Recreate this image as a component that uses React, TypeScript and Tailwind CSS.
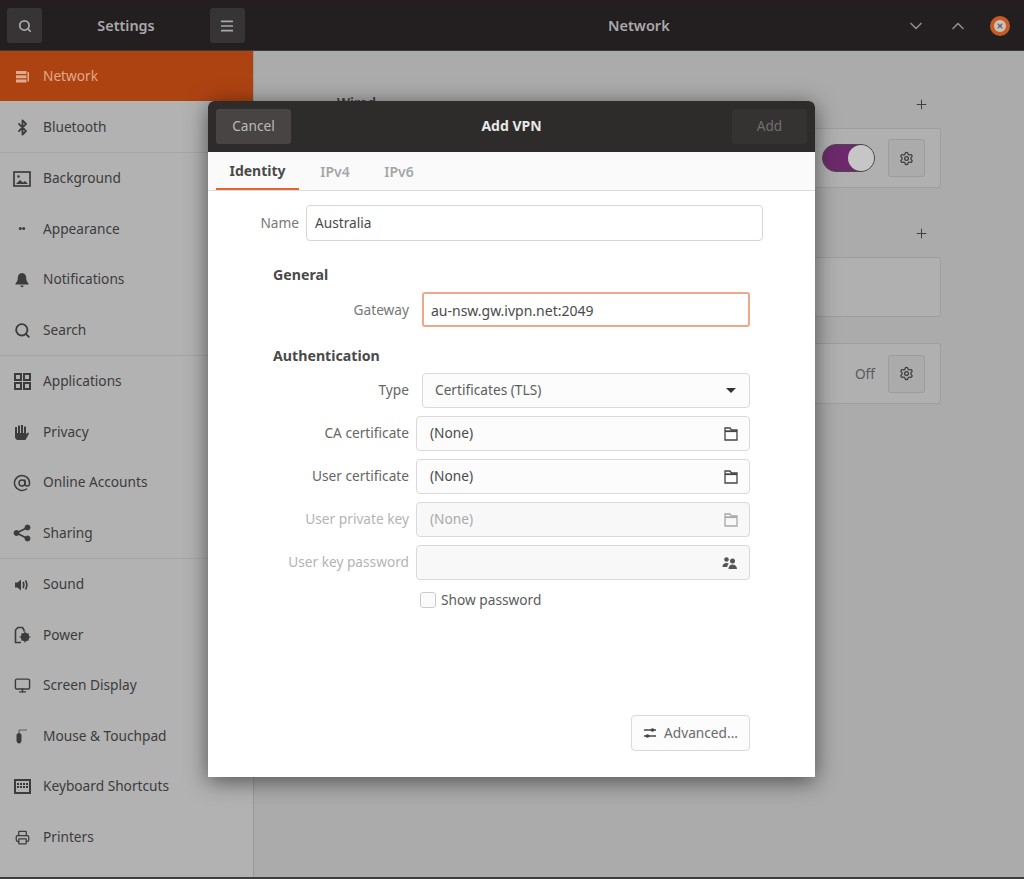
import { AtSign, Bluetooth, ChevronDown, ChevronUp, Menu, Monitor, Plus, Printer, Search, Settings, X } from 'lucide-react';
import type { ReactNode } from 'react';

const NetworkIcon = () => (
  <svg width="16" height="16" viewBox="0 0 16 16" fill="currentColor">
    <path d="M1 2h10.500v3H1zM1 6.200h10.500v3H1zM1 10.400h10.500v3H1zM12.500 3h1.500v9.500h-1.500z" />
  </svg>
);

const PictureIcon = () => (
  <svg width="18" height="16" viewBox="0 0 18 16" fill="none" stroke="currentColor" strokeWidth="1.700">
    <rect x="1" y="1" width="16" height="14" />
    <circle cx="5.500" cy="5.500" r="1.300" fill="currentColor" stroke="none" />
    <path d="M3 13l4-4 3 2.500 2-1.500 3 3z" fill="currentColor" stroke="none" />
  </svg>
);

const AppearanceIcon = () => (
  <svg width="16" height="16" viewBox="0 0 16 16" fill="currentColor">
    <circle cx="6.300" cy="7.500" r="1.500" />
    <circle cx="9.700" cy="7.500" r="1.500" />
  </svg>
);

const BellIcon = () => (
  <svg width="16" height="16" viewBox="0 0 16 16" fill="currentColor">
    <path d="M8 1c-2.800 0-4.200 2.200-4.200 4.700 0 2.500-.8 4.300-2.300 5.800v1h13v-1c-1.500-1.500-2.300-3.300-2.300-5.800C12.200 3.200 10.800 1 8 1zM6.300 13.500h3.400a1.700 1.700 0 0 1-3.400 0z" />
  </svg>
);

const AppsIcon = () => (
  <svg width="17" height="17" viewBox="0 0 17 17" fill="none" stroke="currentColor" strokeWidth="2">
    <rect x="1" y="1" width="6" height="6" />
    <rect x="10" y="1" width="6" height="6" />
    <rect x="1" y="10" width="6" height="6" />
    <rect x="10" y="10" width="6" height="6" />
  </svg>
);

const HandIcon = () => (
  <svg width="18" height="18" viewBox="0 0 18 18" fill="currentColor">
    <path d="M2 4h2v6h1V2.500h2V10h1V2h2v8h1V3.500h2V11l2-1.500 1 1-3.500 6.500H5c-2 0-3-1.500-3-3.500z" />
  </svg>
);

const ShareIcon = () => (
  <svg width="18" height="18" viewBox="0 0 18 18" fill="currentColor" stroke="currentColor">
    <circle cx="3.500" cy="9" r="2.500" />
    <circle cx="14.500" cy="3.500" r="2.500" />
    <circle cx="14.500" cy="14.500" r="2.500" />
    <path d="M3.500 9l11-5.500M3.500 9l11 5.500" strokeWidth="1.800" />
  </svg>
);

const SoundIcon = () => (
  <svg width="16" height="16" viewBox="0 0 16 16" fill="currentColor">
    <path d="M1 5.500h2.500L7 2.500v11l-3.500-3H1z" />
    <path d="M9 5c1 1.800 1 4.200 0 6M11.500 3.500c1.700 2.800 1.700 6.200 0 9" fill="none" stroke="currentColor" strokeWidth="1.600" />
  </svg>
);

const PowerIcon = () => (
  <svg width="18" height="18" viewBox="0 0 18 18" fill="none" stroke="currentColor" strokeWidth="1.600">
    <path d="M8 16.500H2.500V4L5 1.500h4.500L11 4v1.500" />
    <circle cx="12" cy="11" r="3.500" fill="currentColor" />
    <path d="M12 5.500v11M6.500 11h11M8.500 7.500l7 7M15.500 7.500l-7 7" strokeWidth="1.200" />
  </svg>
);

const MouseIcon = () => (
  <svg width="18" height="18" viewBox="0 0 18 18" fill="currentColor">
    <path d="M3.500 8.500c0-1.500 1-2.500 2.300-2.500h.4c1.300 0 2.300 1 2.300 2.500v5c0 1.500-1 3-2.500 3s-2.500-1.500-2.500-3z" />
    <path d="M5.500 6V3h1.200v3zM6 2.500h8v1H6z" opacity="0.7" />
  </svg>
);

const KeyboardIcon = () => (
  <svg width="17" height="15" viewBox="0 0 17 15" fill="none" stroke="currentColor" strokeWidth="2">
    <rect x="1" y="1" width="15" height="13" />
    <path d="M3 5h11M3 8h11" strokeDasharray="2 1" />
  </svg>
);

// folder with the tab sticking up at the left, as in the file choosers
const FolderIcon = ({ className }: { className: string }) => (
  <svg width="14" height="14" viewBox="0 0 14 14" fill="none" stroke="currentColor" strokeWidth="1.300" className={className}>
    <path d="M1 1h5l1.500 2H13v10H1z" />
    <path d="M1 4.200h12" strokeWidth="1.800" />
  </svg>
);

const PeopleIcon = () => (
  <svg width="16" height="14" viewBox="0 0 16 14" fill="currentColor" className="text-[#555555]">
    <circle cx="4.500" cy="3.500" r="2.300" />
    <path d="M0.500 11c0-2.500 1.500-4 4-4 1 0 1.800.2 2.400.7C5.800 8.500 5.300 9.700 5.300 11z" />
    <circle cx="10.500" cy="5" r="2.500" />
    <path d="M6.500 13c0-2.700 1.500-4.500 4-4.500s4.500 1.800 4.500 4.500z" />
  </svg>
);

const SwitchesIcon = () => (
  <svg width="14" height="14" viewBox="0 0 14 14" fill="currentColor" stroke="currentColor" className="text-[#444444]">
    <path d="M1 4h12M1 10h12" strokeWidth="1.300" fill="none" />
    <circle cx="9.500" cy="4" r="1.800" stroke="none" />
    <circle cx="4.500" cy="10" r="1.800" stroke="none" />
  </svg>
);

const items: { name: string; icon: ReactNode; divider?: boolean }[] = [
  { name: 'Bluetooth', icon: <Bluetooth size={17} strokeWidth={2.6} />, divider: true },
  { name: 'Background', icon: <PictureIcon /> },
  { name: 'Appearance', icon: <AppearanceIcon /> },
  { name: 'Notifications', icon: <BellIcon /> },
  { name: 'Search', icon: <Search size={17} strokeWidth={2.6} />, divider: true },
  { name: 'Applications', icon: <AppsIcon /> },
  { name: 'Privacy', icon: <HandIcon /> },
  { name: 'Online Accounts', icon: <AtSign size={18} strokeWidth={2} /> },
  { name: 'Sharing', icon: <ShareIcon />, divider: true },
  { name: 'Sound', icon: <SoundIcon /> },
  { name: 'Power', icon: <PowerIcon /> },
  { name: 'Screen Display', icon: <Monitor size={17} strokeWidth={2} /> },
  { name: 'Mouse & Touchpad', icon: <MouseIcon /> },
  { name: 'Keyboard Shortcuts', icon: <KeyboardIcon /> },
  { name: 'Printers', icon: <Printer size={15} strokeWidth={2} /> },
];

const FormRow = ({ label, dim, offset, children }: { label: string; dim?: boolean; offset: string; children: ReactNode }) => (
  <div className="flex items-center h-[35px] mb-2">
    <span className={`w-[201px] text-right ${offset} ${dim ? 'text-[#b4b4b4]' : 'text-[#666666]'}`}>{label}</span>
    {children}
  </div>
);

const FileField = ({ value, dim, icon }: { value?: string; dim?: boolean; icon: ReactNode }) => (
  <div className={`w-[334px] h-[35px] flex items-center justify-between pl-[13px] pr-[11px] rounded-[4px] border border-[#d9d9d9] ${dim ? 'bg-[#f8f8f8] text-[#aaaaaa]' : 'bg-[#fcfcfc] text-[#4a4a4a]'}`}>
    <span>{value}</span>
    {icon}
  </div>
);

const App = () => {
  return (
    <div className="relative w-[1024px] h-[879px] overflow-hidden flex flex-col bg-[#ababab] text-[13.7px] font-['Noto_Sans','Open_Sans',sans-serif]">
      {/* Title bar */}
      <header className="h-[51px] shrink-0 flex bg-[#231f20] border-t border-[#2c1c22] border-b border-b-[#3a3a3a] text-[#a9a9a9]">
        <div className="w-[253px] shrink-0 flex items-center justify-between pl-[7px] pr-[8px]">
          <button className="w-[35px] h-[35px] rounded-[3px] bg-[#363434] flex items-center justify-center">
            <Search size={14} strokeWidth={3} />
          </button>
          <span className="font-semibold text-[14.4px] text-[#a8a8a8]">Settings</span>
          <button className="w-[35px] h-[35px] rounded-[3px] bg-[#363434] flex items-center justify-center">
            <Menu size={16} strokeWidth={2.6} />
          </button>
        </div>
        <div className="flex-1 flex items-center pl-[355px]">
          <span className="font-semibold text-[14.5px]">Network</span>
          <ChevronDown size={20} strokeWidth={2} className="ml-[236px] text-[#8d8d8d]" />
          <ChevronUp size={20} strokeWidth={2} className="ml-[22px] text-[#8d8d8d]" />
          <span className="ml-[22px] w-[20px] h-[20px] rounded-full bg-[#c95a26] flex items-center justify-center">
            <span className="w-[12px] h-[12px] rounded-full bg-[#c9c3bf] flex items-center justify-center">
              <X size={8} strokeWidth={3.5} className="text-[#6b5a55]" />
            </span>
          </span>
        </div>
      </header>

      <div className="flex-1 flex min-h-0 border-b-2 border-[#3d3d3d]">
        {/* Sidebar */}
        <aside className="w-[254px] shrink-0 flex flex-col bg-[#b2b2b2] border-r border-[#989898] text-[#3c3c3c]">
          <div className="h-[50px] shrink-0 flex items-center pt-[1px] bg-[#ae4312] text-[#dfa98b] pl-[15px]">
            <NetworkIcon />
            <span className="ml-[12px]">Network</span>
          </div>
          {items.map((item) => (
            <div key={item.name} className={`shrink-0 flex items-center pt-[2px] ${item.divider ? 'h-[51.5px] border-b border-[#a6a6a6]' : 'h-[50.5px]'}`}>
              <span className="w-[43px] flex items-center justify-center pl-[1px]">{item.icon}</span>
              <span>{item.name}</span>
            </div>
          ))}
        </aside>

        {/* Network panel behind the dialog */}
        <main className="flex-1 flex flex-col items-center pt-[42px] text-[#5a5a5a]">
          <div className="w-[604px]">
            <div className="h-[35px] flex justify-between pr-[12px]">
              <span className="font-semibold text-[#3c3c3c]">Wired</span>
              <Plus size={15} strokeWidth={1.6} className="mt-[4px] text-[#3f3f3f]" />
            </div>
            <div className="h-[60px] flex items-center justify-end gap-[13px] pr-[15px] rounded-[3px] border border-[#9e9e9e] bg-[#b0b0b0]">
              <div className="w-[53px] h-[28px] rounded-full bg-[#6c2a6c] border border-[#4a4a4a] flex justify-end">
                <span className="w-[26px] h-[26px] rounded-full bg-[#c6c6c6]" />
              </div>
              <button className="w-[37px] h-[38px] rounded-[3px] border border-[#9c9c9c] bg-[#ababab] flex items-center justify-center">
                <Settings size={15} strokeWidth={2} className="text-[#3c3c3c]" />
              </button>
            </div>
            <div className="h-[69px] flex items-end justify-end pb-[16px] pr-[12px]">
              <Plus size={15} strokeWidth={1.6} className="text-[#3f3f3f]" />
            </div>
            <div className="h-[60px] rounded-[3px] border border-[#9e9e9e] bg-[#b0b0b0]" />
            <div className="mt-[26px] h-[61px] flex items-center justify-end gap-[13px] pr-[15px] rounded-[3px] border border-[#9e9e9e] bg-[#b0b0b0]">
              <span className="pt-[2px]">Off</span>
              <button className="w-[37px] h-[38px] rounded-[3px] border border-[#9c9c9c] bg-[#ababab] flex items-center justify-center">
                <Settings size={15} strokeWidth={2} className="text-[#3c3c3c]" />
              </button>
            </div>
          </div>
        </main>
      </div>

      {/* Add VPN dialog */}
      <section className="absolute left-[208px] top-[101px] w-[607px] h-[676px] flex flex-col rounded-t-[6px] bg-white shadow-[0_4px_22px_rgba(0,0,0,0.55)]">
        <div className="h-[51px] shrink-0 flex items-center justify-between px-[8px] pb-[1px] rounded-t-[6px] bg-[#2e2b2b]">
          <button className="w-[75px] h-[35px] rounded-[3px] bg-[#484444] text-[#b9b9b9]">Cancel</button>
          <span className="mb-[1px] font-bold text-[14px] text-[#e8e8e8]">Add VPN</span>
          <button className="w-[75px] h-[35px] rounded-[3px] bg-[#353232] text-[#6f6f6f]">Add</button>
        </div>
        <nav className="h-[39px] shrink-0 flex px-[8px] bg-[#fafafa] border-b border-[#dcdcdc]">
          <span className="w-[83px] flex items-center justify-center font-bold text-[14px] text-[#4a4a4a] border-b-2 border-[#e2672e]">Identity</span>
          <span className="ml-[16px] w-[40px] flex items-center justify-center font-semibold text-[14px] text-[#a6a6a6]">IPv4</span>
          <span className="ml-[24px] w-[40px] flex items-center justify-center font-semibold text-[14px] text-[#a6a6a6]">IPv6</span>
        </nav>

        <div className="flex-1 flex flex-col pt-[14px] pb-[26px] text-[#4a4a4a]">
          <div className="flex items-center h-[36px]">
            <span className="w-[91px] text-right text-[#777777]">Name</span>
            <div className="ml-[7px] w-[457px] h-[36px] flex items-center px-[8px] pt-[1px] rounded-[4px] border border-[#d6d6d6]">Australia</div>
          </div>

          <h3 className="ml-[65px] mt-[24px] h-[20px] font-bold text-[14.2px] leading-[20px] text-[#4a4a4a]">General</h3>
          <div className="flex items-center h-[35px] mt-[7px]">
            <span className="w-[201px] text-right pt-[1px] text-[#777777]">Gateway</span>
            <div className="ml-[13px] w-[328px] h-[35px] flex items-center px-[7px] pt-[1px] text-[14px] rounded-[3px] border-2 border-[#eda88a]">au-nsw.gw.ivpn.net:2049</div>
          </div>

          <h3 className="ml-[65px] mt-[19px] h-[20px] font-bold text-[14.2px] leading-[20px] text-[#4a4a4a]">Authentication</h3>
          <div className="mt-[7px]">
            <FormRow label="Type" offset="mr-[13px]">
              <div className="w-[328px] h-[35px] flex items-center justify-between pl-[12px] pr-[13px] rounded-[4px] border border-[#d9d9d9] bg-[#fcfcfc] text-[#5c5c5c]">
                <span>Certificates (TLS)</span>
                <span className="w-0 h-0 border-x-[5px] border-t-[5px] border-x-transparent border-t-[#333333]" />
              </div>
            </FormRow>
            <FormRow label="CA certificate" offset="mr-[7px]">
              <FileField value="(None)" icon={<FolderIcon className="text-[#444444]" />} />
            </FormRow>
            <FormRow label="User certificate" offset="mr-[7px]">
              <FileField value="(None)" icon={<FolderIcon className="text-[#444444]" />} />
            </FormRow>
            <FormRow label="User private key" dim offset="mr-[7px]">
              <FileField value="(None)" dim icon={<FolderIcon className="text-[#a8a8a8]" />} />
            </FormRow>
            <FormRow label="User key password" dim offset="mr-[7px]">
              <FileField dim icon={<PeopleIcon />} />
            </FormRow>
          </div>
          <label className="ml-[212px] mt-[2px] flex items-center gap-[5px] h-[20px] text-[#5c5c5c]">
            <span className="w-[16px] h-[16px] rounded-[3px] border border-[#cccccc] bg-[#fafafa]" />
            Show password
          </label>

          <button className="mt-auto ml-[423px] w-[119px] h-[36px] flex items-center justify-center gap-[7px] rounded-[4px] border border-[#d9d9d9] bg-[#fcfcfc] text-[#6a6a6a]">
            <SwitchesIcon />
            Advanced...
          </button>
        </div>
      </section>
    </div>
  );
};

export default App;
